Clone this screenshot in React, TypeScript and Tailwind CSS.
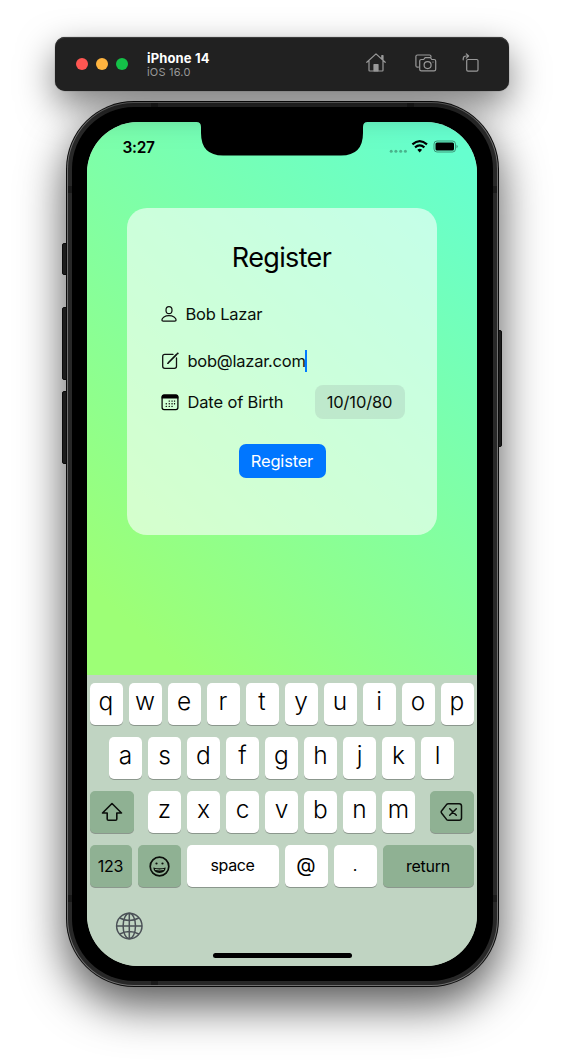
import type { ReactNode } from "react";

const topRow = ["q", "w", "e", "r", "t", "y", "u", "i", "o", "p"];
const midRow = ["a", "s", "d", "f", "g", "h", "j", "k", "l"];
const lowRow = ["z", "x", "c", "v", "b", "n", "m"];

function Toolbar() {
  return (
    <header className="relative z-10 flex h-[54px] w-[454px] items-center rounded-[10px] bg-[#212121] pl-[21px] shadow-[inset_0_1px_0_#3c3c3c,0_14px_36px_rgba(0,0,0,0.5),0_0_1px_rgba(0,0,0,0.7)]">
      <div className="flex gap-2">
        <span className="size-3 rounded-full bg-[#ff5652]" />
        <span className="size-3 rounded-full bg-[#ffb43f]" />
        <span className="size-3 rounded-full bg-[#14c148]" />
      </div>
      <div className="ml-[19px] grow pt-px">
        <div className="text-[13px] leading-[15px] font-bold tracking-[0.15px] text-white">iPhone 14</div>
        <div className="text-[11px] leading-[13px] tracking-[0.2px] text-[#999999]">iOS 16.0</div>
      </div>
      <svg className="mr-[29px] mb-[3px] h-[19px] w-5" viewBox="0 0 20 19" fill="none" stroke="#999" strokeWidth="1.2" strokeLinecap="round" strokeLinejoin="round">
        <path d="M.8 9.3 10 .9l9.200 8.400M3 7.800v9.500q0 .7.700.700h12.600q.700 0 .700-.700V7.800M15.800 5.800V2.700h1.200v4.200" />
        <path d="M8 17.800v-6.300h4v6.300z" fill="#999" />
      </svg>
      <svg className="mr-[25px] mb-[2px] h-[18px] w-[22px]" viewBox="0 0 22 18" fill="none" stroke="#999" strokeWidth="1.200" strokeLinejoin="round">
        <path d="M3.800 13.200H2.500Q.9 13.200.9 11.700V2.500Q.9 1 2.500 1h12Q16 1 16 2.500v1" />
        <path d="M6.300 5.500h2.400l1.400-1.900h5.300l1.400 1.900h2.300q1.600 0 1.600 1.600v8.200q0 1.600-1.600 1.600H6.300q-1.600 0-1.600-1.600V7.100q0-1.600 1.600-1.600z" />
        <circle cx="12.600" cy="11.100" r="3.500" />
        <path d="M17.600 8.100h.8" />
      </svg>
      <svg className="mr-[30px] mb-[3px] h-[19px] w-[17px]" viewBox="0 0 17 19" fill="none" stroke="#999" strokeWidth="1.200" strokeLinecap="round" strokeLinejoin="round">
        <rect x="4.700" y="6.500" width="11.300" height="11.600" rx="1.300" />
        <path d="M1.200 6.800V6Q1.200 3 4.200 3h2M4.300.9 6.600 3 4.300 5.100" />
      </svg>
    </header>
  );
}

function StatusBar() {
  return (
    <div className="flex h-[47px] items-start pt-4 pr-[19px] pl-9">
      <span className="grow text-[15.500px] leading-5 font-semibold tracking-[-0.300px]">3:27</span>
      <svg className="mt-px h-[14px] w-[71px]" viewBox="0 0 71 14">
        <g fill="#000" opacity=".3">
          <circle cx="4.200" cy="12.300" r="1.500" />
          <circle cx="8.900" cy="12.300" r="1.500" />
          <circle cx="13.700" cy="12.300" r="1.500" />
          <circle cx="18.400" cy="12.300" r="1.500" />
        </g>
        <g fill="none" stroke="#000" strokeWidth="2.200">
          <path d="M25.400 5.400q7.300-6.400 14.600 0M28 8.300q4.700-3.900 9.400 0" />
        </g>
        <path d="m32.700 13.500-2.400-2.700q2.400-1.900 4.800 0z" />
        <rect x="47" y="2" width="21.500" height="11" rx="3" fill="none" stroke="#000" strokeOpacity=".4" />
        <rect x="48.500" y="3.500" width="18.500" height="8" rx="1.500" />
        <path d="M69.500 5.700q1.200.5 1.200 1.800t-1.200 1.800z" opacity=".4" />
      </svg>
    </div>
  );
}

function PersonIcon() {
  return (
    <svg className="h-4 w-4" viewBox="0 0 16 16" fill="none" stroke="#111" strokeWidth="1.250">
      <ellipse cx="8" cy="4.200" rx="3" ry="3.500" />
      <path d="M2.200 15.200h11.600q1.300 0 1.300-1.100C15.100 11.800 12 9.700 8 9.700S.9 11.800.9 14.100q0 1.100 1.300 1.100z" />
    </svg>
  );
}

function ComposeIcon() {
  return (
    <svg className="h-[18px] w-[18px]" viewBox="0 0 18 18" fill="none" stroke="#111" strokeWidth="1.300" strokeLinecap="round">
      <path d="M12 2.400H3.800Q1.700 2.400 1.700 4.500v9.700q0 2.100 2.100 2.100h9.600q2.100 0 2.100-2.100V6" />
      <path d="m7.600 10.500 7.800-7.800" strokeWidth="1.700" />
      <path d="m16.500 1.600.2-.2" strokeWidth="1.900" />
      <path d="m6.700 11.400.7-.3" />
    </svg>
  );
}

function CalendarIcon() {
  const dots = [[8.200, 7], [11, 7], [13.500, 7], [5.200, 9.700], [8.200, 9.700], [11, 9.700], [13.500, 9.700], [5.200, 12.400], [8.200, 12.400], [11, 12.400]];
  return (
    <svg className="h-[17px] w-[18px]" viewBox="0 0 18 17">
      <rect x="1.100" y="1.200" width="15.800" height="14.300" rx="2" fill="none" stroke="#000" strokeWidth="1.250" />
      <path d="M.6 4.500V2.900Q.6.6 2.900.6h12.200q2.300 0 2.300 2.300v1.600z" />
      {dots.map(([x, y]) => (
        <rect key={`${x}-${y}`} x={x - 0.6} y={y - 0.6} width="1.300" height="1.300" rx=".4" />
      ))}
    </svg>
  );
}

function RegisterCard() {
  return (
    <main className="mx-10 mt-[39px] flex h-[327px] flex-col rounded-[20px] bg-white/60 pt-[33px] pr-8 pl-[34px] text-[16.500px] text-[#0a0f0b]">
      <h1 className="-ml-[2px] text-center text-[27px] leading-[34px] tracking-[-0.650px] text-black">Register</h1>
      <div className="mt-[28px] flex h-[22px] items-center">
        <PersonIcon />
        <span className="ml-[9px] tracking-[-0.200px]">Bob Lazar</span>
      </div>
      <div className="mt-[25px] flex h-[22px] items-center">
        <ComposeIcon />
        <span className="ml-[9px] w-[117px] tracking-[-0.250px]">bob@lazar.com</span>
        <span className="h-[22px] w-[2px] bg-[#007aff]" />
      </div>
      <div className="mt-[13px] flex h-[34px] items-center">
        <CalendarIcon />
        <span className="ml-[9px] grow tracking-[-0.150px]">Date of Birth</span>
        <span className="flex h-[34px] w-[90px] items-center justify-center rounded-[8px] bg-[#767680]/16 tracking-[-0.150px]">10/10/80</span>
      </div>
      <button className="mt-[25px] ml-[78px] h-[34px] w-[87px] rounded-[7px] bg-[#0076ff] text-[16.500px] tracking-[-0.200px] text-white">Register</button>
    </main>
  );
}

function Key({ children, className }: { children: ReactNode; className: string }) {
  return (
    <div className={`flex h-[42px] items-center justify-center rounded-[5px] shadow-[0_1px_0_#8b978d] ${className}`}>{children}</div>
  );
}

function Letter({ label }: { label: string }) {
  return (
    <Key className="w-[33px] bg-white pb-[5px] text-[24.500px] font-[350]">
      <span>{label}</span>
    </Key>
  );
}

function Keyboard() {
  return (
    <section className="flex h-[291px] flex-col bg-[#c0d4c2] px-[3px] pt-2 text-black">
      <div className="flex justify-center gap-[6px]">{topRow.map((k) => <Letter key={k} label={k} />)}</div>
      <div className="mt-3 flex justify-center gap-[6px]">{midRow.map((k) => <Letter key={k} label={k} />)}</div>
      <div className="mt-3 flex justify-between">
        <Key className="w-[44px] bg-[#8fb193]">
          <svg className="h-5 w-[22px]" viewBox="0 0 22 20" fill="none" stroke="#0b0f0b" strokeWidth="1.600" strokeLinejoin="round">
            <path d="M11 1.500 1.500 11h4.700v6q0 1.300 1.300 1.300h7q1.300 0 1.300-1.300v-6h4.700z" />
          </svg>
        </Key>
        <div className="flex gap-[6px]">{lowRow.map((k) => <Letter key={k} label={k} />)}</div>
        <Key className="w-[44px] bg-[#8fb193]">
          <svg className="h-5 w-[23px]" viewBox="0 0 23 20" fill="none" stroke="#0b0f0b" strokeWidth="1.500" strokeLinejoin="round" strokeLinecap="round">
            <path d="M8.300 1.700h10.900q2.300 0 2.300 2.300v12q0 2.300-2.300 2.300H8.300q-1 0-1.800-.9L1.700 11.200q-1-1.200 0-2.400l4.800-6.200q.8-.9 1.800-.9z" />
            <path d="m9.700 6.700 6.600 6.600m0-6.600-6.600 6.600" />
          </svg>
        </Key>
      </div>
      <div className="mt-3 flex gap-[6px] text-[16px]">
        <Key className="w-[42px] bg-[#8fb193] tracking-[-0.200px]">123</Key>
        <Key className="w-[43px] bg-[#8fb193]">
          <svg className="h-[21px] w-[21px]" viewBox="0 0 21 21" fill="none" stroke="#0b0f0b" strokeWidth="1.700">
            <circle cx="10.500" cy="10.500" r="9.300" />
            <circle cx="7.500" cy="7.500" r="1.100" fill="#0b0f0b" stroke="none" />
            <circle cx="13.500" cy="7.500" r="1.100" fill="#0b0f0b" stroke="none" />
            <path d="M4.300 11.500q6.200 1.700 12.400 0-.4 5.400-6.200 5.400t-6.200-5.400z" fill="#0b0f0b" stroke="none" />
            <path d="M6 13.400q4.500 1.200 9 0" stroke="#8fb193" strokeWidth="1" />
          </svg>
        </Key>
        <Key className="w-[92px] bg-white pb-[3px] tracking-[-0.350px]">space</Key>
        <Key className="w-[43px] bg-white pb-[2px] text-[20px]">@</Key>
        <Key className="w-[43px] bg-white pb-[2px]">.</Key>
        <Key className="w-[91px] bg-[#8fb193] tracking-[-0.250px]">return</Key>
      </div>
      <svg className="mt-[25px] ml-[25px] h-7 w-7" viewBox="0 0 28 28" fill="none" stroke="#4b5157" strokeWidth="1.500">
        <circle cx="14.300" cy="14" r="12.700" />
        <ellipse cx="14.300" cy="14" rx="6.200" ry="12.700" />
        <path d="M14.300 1.300v25.400M1.600 14H27M4.800 6q9.500 5 19 0M4.800 22q9.500-5 19 0" />
      </svg>
      <div className="mt-[13px] ml-px h-[5px] w-[139px] self-center rounded-full bg-black" />
    </section>
  );
}

function Phone() {
  return (
    <div className="relative mt-[10px] h-[886px] w-[433px]">
      <i className="absolute top-[142px] -left-1 h-8 w-[6px] rounded-l-[2px] border border-[#111] bg-[#2a2a2a]" />
      <i className="absolute top-[206px] -left-1 h-[73px] w-[6px] rounded-l-[2px] border border-[#111] bg-[#2a2a2a]" />
      <i className="absolute top-[290px] -left-1 h-[73px] w-[6px] rounded-l-[2px] border border-[#111] bg-[#2a2a2a]" />
      <i className="absolute top-[229px] -right-[3px] h-[117px] w-[6px] rounded-r-[2px] border border-[#111] bg-[#2a2a2a]" />
      <div className="relative h-full rounded-[68px] bg-[#0b0b0b] p-px shadow-[0_18px_46px_rgba(0,0,0,0.68)]">
        <div className="h-full rounded-[67px] bg-[#707070] p-px">
          <div className="h-full rounded-[66px] bg-[#282828] p-1">
            <div className="h-full rounded-[62px] bg-black pt-[15px] pl-[15px]">
              <div className="relative h-[844px] w-[390px] overflow-hidden rounded-[51px] bg-[#c0d4c2]">
                <div className="h-[553px] overflow-hidden bg-[linear-gradient(222deg,#66ffcf_5%,#9dff76_90%)]">
                  <StatusBar />
                  <RegisterCard />
                </div>
                <Keyboard />
                <svg className="absolute top-0 left-[109px] h-[34px] w-[172px]" viewBox="0 0 172 34">
                  <path d="M.5 0h171q-4.500 0-4.500 5v6q0 22.500-22 22.500h-118q-22 0-22-22.500V5Q5 0 .5 0z" />
                </svg>
              </div>
            </div>
          </div>
        </div>
        <i className="absolute top-[2px] left-[85px] h-1 w-[7px] bg-[#1a1a1a]" />
        <i className="absolute top-[2px] right-[85px] h-1 w-[7px] bg-[#1a1a1a]" />
        <i className="absolute bottom-[2px] left-[85px] h-1 w-[7px] bg-[#1a1a1a]" />
        <i className="absolute top-[85px] left-[2px] h-[7px] w-1 bg-[#1a1a1a]" />
        <i className="absolute top-[85px] right-[2px] h-[7px] w-1 bg-[#1a1a1a]" />
        <i className="absolute bottom-[85px] left-[2px] h-[7px] w-1 bg-[#1a1a1a]" />
        <i className="absolute right-[2px] bottom-[85px] h-[7px] w-1 bg-[#1a1a1a]" />
      </div>
    </div>
  );
}

export default function App() {
  return (
    <div className="flex h-[1062px] w-[564px] flex-col items-center overflow-hidden bg-white pt-[37px] font-['Inter','Noto_Sans',sans-serif] antialiased">
      <Toolbar />
      <Phone />
    </div>
  );
}
